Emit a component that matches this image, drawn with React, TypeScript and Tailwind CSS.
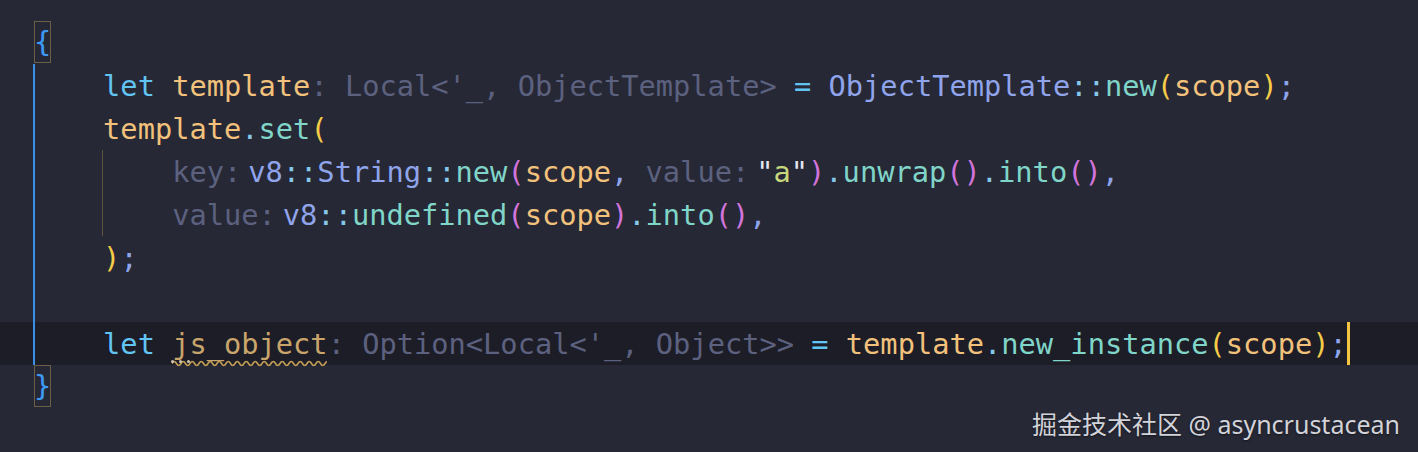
import type { ReactNode } from 'react'

type Tok = [string, string]

const kw = 'text-[#62c4f3]'
const vr = 'text-[#f2c27c]'
const hint = 'text-[#5c617f]'
const op = 'text-[#62c4f3]'
const ty = 'text-[#8fa4ea]'
const pu = 'text-[#85c8ea]'
const fn = 'text-[#80d5c9]'
const b1 = 'text-[#f6cc48]'
const b2 = 'text-[#d274db]'
const semi = 'text-[#8fa4ea]'
const str = 'text-[#c7d87c]'
const quote = 'text-[#e3e4ee]'
const plain = 'text-[#c9cde4]'

function Toks({ toks }: { toks: Tok[] }) {
  return (
    <>
      {toks.map(([t, c], i) => (
        <span key={i} className={c}>
          {t}
        </span>
      ))}
    </>
  )
}

function Hint({ children }: { children: ReactNode }) {
  return <span className={`${hint} mr-[7px]`}>{children}</span>
}

interface LineProps {
  children?: ReactNode
  active?: boolean
  guide?: boolean
  subGuide?: boolean
}

function Line({ children, active, guide, subGuide }: LineProps) {
  return (
    <div
      className={`relative h-[43px] pl-[34px] pt-[1px] whitespace-pre ${
        active ? 'bg-[#1c1d27]' : ''
      }`}
    >
      {guide && <span className="absolute left-[33px] top-0 h-full w-[2px] bg-[#3b8eea]" />}
      {subGuide && <span className="absolute left-[102px] top-0 h-full w-[1px] bg-[#5e543c]" />}
      {children}
    </div>
  )
}

function Bracket({ ch }: { ch: string }) {
  return (
    <span className="inline-block h-[42px] w-[17px] -mt-[1px] align-top text-[#3d9bf5] shadow-[inset_0_0_0_1px_#6b5f45]">
      {ch}
    </span>
  )
}

// squiggle under the unused variable
const wave = 'M0 4.5 q2.25 -4 4.5 0 ' + Array.from({ length: 34 }, () => 't4.5 0').join(' ')

export default function App() {
  return (
    <div className="relative w-[1418px] h-[452px] overflow-hidden bg-[#262835] pt-[21px] font-['DejaVu_Sans_Mono',monospace] text-[28.7px] leading-[43px]">
      <Line>
        <Bracket ch="{" />
      </Line>

      <Line guide>
        <Toks
          toks={[
            ['    ', plain],
            ['let', kw],
            [' ', plain],
            ['template', vr],
            [": Local<'_, ObjectTemplate>", hint],
            [' ', plain],
            ['=', op],
            [' ', plain],
            ['ObjectTemplate', ty],
            ['::', pu],
            ['new', fn],
            ['(', b1],
            ['scope', vr],
            [')', b1],
            [';', semi],
          ]}
        />
      </Line>

      <Line guide>
        <Toks
          toks={[
            ['    ', plain],
            ['template', vr],
            ['.', pu],
            ['set', fn],
            ['(', b1],
          ]}
        />
      </Line>

      <Line guide subGuide>
        <span>{'        '}</span>
        <Hint>key:</Hint>
        <Toks
          toks={[
            ['v8', ty],
            ['::', pu],
            ['String', ty],
            ['::', pu],
            ['new', fn],
            ['(', b2],
            ['scope', vr],
            [', ', semi],
          ]}
        />
        <Hint>value:</Hint>
        <Toks
          toks={[
            ['"', quote],
            ['a', str],
            ['"', quote],
            [')', b2],
            ['.', pu],
            ['unwrap', fn],
            ['()', b2],
            ['.', pu],
            ['into', fn],
            ['()', b2],
            [',', semi],
          ]}
        />
      </Line>

      <Line guide subGuide>
        <span>{'        '}</span>
        <Hint>value:</Hint>
        <Toks
          toks={[
            ['v8', ty],
            ['::', pu],
            ['undefined', fn],
            ['(', b2],
            ['scope', vr],
            [')', b2],
            ['.', pu],
            ['into', fn],
            ['()', b2],
            [',', semi],
          ]}
        />
      </Line>

      <Line guide>
        <Toks
          toks={[
            ['    ', plain],
            [')', b1],
            [';', semi],
          ]}
        />
      </Line>

      <Line guide />

      <Line guide active>
        <Toks
          toks={[
            ['    ', plain],
            ['let', kw],
            [' ', plain],
            ['js_object', 'text-[#c9a56b]'],
            [": Option<Local<'_, Object>>", hint],
            [' ', plain],
            ['=', op],
            [' ', plain],
            ['template', vr],
            ['.', pu],
            ['new_instance', fn],
            ['(', b1],
            ['scope', vr],
            [')', b1],
            [';', semi],
          ]}
        />
        <span className="inline-block h-[43px] w-[3px] -mt-[1px] align-top bg-[#f5c542]" />
        <svg
          className="absolute left-[172px] top-[37px] h-[9px] w-[155px]"
          viewBox="0 0 155 9"
        >
          <path d={wave} fill="none" stroke="#bf9b55" strokeWidth="1.7" />
        </svg>
        <span className="absolute left-[171px] top-[38px] flex gap-[5px]">
          <span className="h-[3px] w-[3px] rounded-full bg-[#cfc8b4]" />
          <span className="h-[3px] w-[3px] rounded-full bg-[#cfc8b4]" />
          <span className="h-[3px] w-[3px] rounded-full bg-[#cfc8b4]" />
        </span>
      </Line>

      <Line>
        <Bracket ch="}" />
      </Line>

      <div className="absolute bottom-[13px] right-[18px] font-['Noto_Sans','Noto_Sans_CJK_SC',sans-serif] text-[25px] leading-[30px] text-[#d3d3da] [text-shadow:0_1px_2px_rgba(0,0,0,0.5)]">
        掘金技术社区 @ asyncrustacean
      </div>
    </div>
  )
}
